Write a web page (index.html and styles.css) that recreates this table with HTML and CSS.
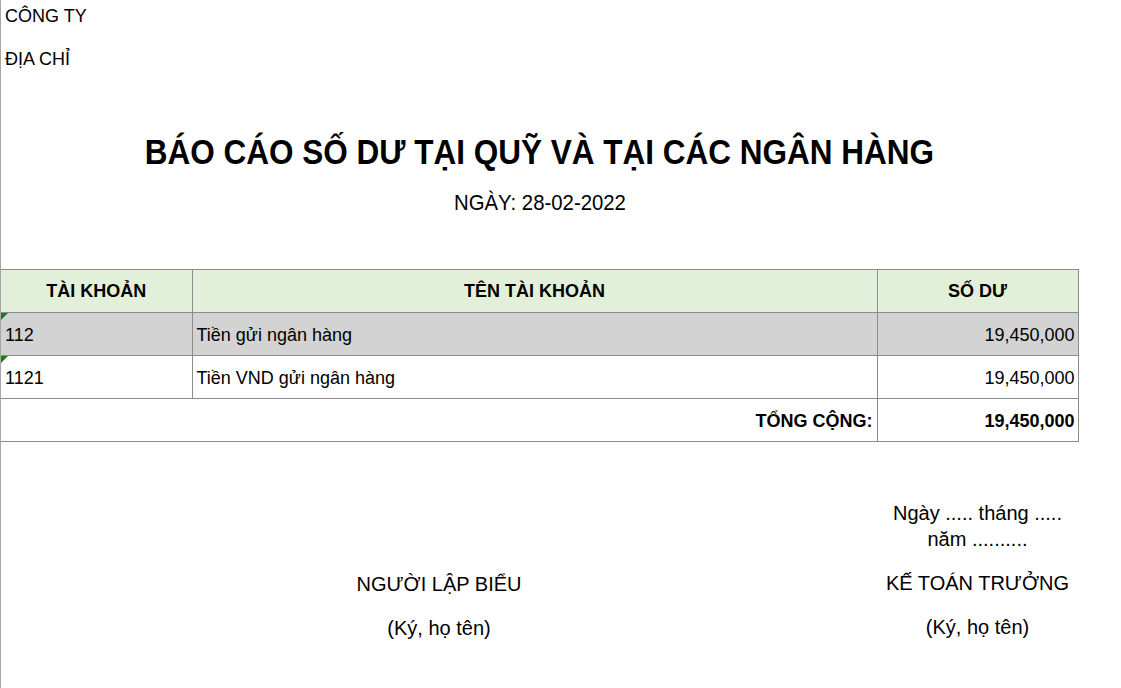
FILE: index.html
```html
<!DOCTYPE html>
<html lang="vi">
<head>
<meta charset="utf-8">
<title>Báo cáo số dư tại quỹ và tại các ngân hàng</title>
<link rel="stylesheet" href="styles.css">
</head>
<body>
<div class="page">
  <div class="company">
    <div class="company-line">CÔNG TY</div>
    <div class="company-line addr">ĐỊA CHỈ</div>
  </div>
  <h1 class="title"><span class="squeeze title-text">BÁO CÁO SỐ DƯ TẠI QUỸ VÀ TẠI CÁC NGÂN HÀNG</span></h1>
  <div class="date"><span class="squeeze date-text">NGÀY: 28-02-2022</span></div>

  <table class="report">
    <colgroup>
      <col class="c1">
      <col class="c2">
      <col class="c3">
    </colgroup>
    <thead>
      <tr>
        <th>TÀI KHOẢN</th>
        <th>TÊN TÀI KHOẢN</th>
        <th>SỐ DƯ</th>
      </tr>
    </thead>
    <tbody>
      <tr class="shade">
        <td class="acc"><span class="flag"></span>112</td>
        <td>Tiền gửi ngân hàng</td>
        <td class="num">19,450,000</td>
      </tr>
      <tr>
        <td class="acc"><span class="flag"></span>1121</td>
        <td>Tiền VND gửi ngân hàng</td>
        <td class="num">19,450,000</td>
      </tr>
      <tr class="total">
        <td colspan="2" class="total-label">TỔNG CỘNG:</td>
        <td class="num">19,450,000</td>
      </tr>
    </tbody>
  </table>

  <div class="sign">
    <div class="sign-left">
      <div class="sign-title">NGƯỜI LẬP BIỂU</div>
      <div class="sign-note">(Ký, họ tên)</div>
    </div>
    <div class="sign-right">
      <div class="sign-date">Ngày ..... tháng .....<br>năm ..........</div>
      <div class="sign-title">KẾ TOÁN TRƯỞNG</div>
      <div class="sign-note">(Ký, họ tên)</div>
    </div>
  </div>
</div>
</body>
</html>
```

FILE: styles.css
```css
html, body {
  margin: 0;
  padding: 0;
  background: #ffffff;
}

body {
  font-family: "Liberation Sans", Arial, sans-serif;
  font-size: 18px;
  color: #000;
  border-left: 1px solid #a6a6a6;
  min-height: 688px;
  box-sizing: border-box;
  overflow: hidden;
}

.page {
  width: 1077px;
}

.company {
  padding-top: 6px;
  padding-left: 4px;
}

.company-line {
  line-height: 20px;
  height: 20px;
}

.company-line.addr {
  margin-top: 23px;
}

.squeeze {
  display: inline-block;
  white-space: nowrap;
  transform-origin: center center;
}

.title {
  margin: 65px 0 0;
  font-family: "Liberation Sans", Arial, sans-serif;
  font-weight: bold;
  font-size: 35px;
  line-height: 36px;
  text-align: center;
}

.title-text {
  transform: scaleX(0.9);
}

.date {
  margin-top: 21px;
  font-size: 22px;
  line-height: 24px;
  text-align: center;
}

.date-text {
  transform: scaleX(0.925);
}

.report {
  margin-top: 54px;
  width: 1077px;
  border-collapse: collapse;
  table-layout: fixed;
}

.c1 { width: 191px; }
.c2 { width: 685px; }
.c3 { width: 201px; }

.report th,
.report td {
  border: 1px solid #8c8c8c;
  height: 43px;
  padding: 0 4px;
  box-sizing: border-box;
  vertical-align: middle;
  line-height: 20px;
}

.report td {
  padding-top: 2px;
}

.report tr > :first-child {
  border-left: none;
}

.report th {
  background: #e2f0d9;
  font-weight: bold;
  text-align: center;
}

.report .shade td {
  background: #d3d3d3;
}

.report td.acc {
  position: relative;
  padding-left: 4px;
}

.flag {
  position: absolute;
  left: 0;
  top: 0;
  width: 0;
  height: 0;
  border-top: 7px solid #1e7b1e;
  border-right: 7px solid transparent;
}

.report td.num {
  text-align: right;
  padding-right: 3px;
}

.report .total td {
  font-weight: bold;
}

.report td.total-label {
  text-align: right;
  padding-right: 4px;
}

.sign {
  display: grid;
  grid-template-columns: 876px 201px;
  font-size: 20px;
}

.sign-left {
  display: flex;
  flex-direction: column;
  align-items: center;
  padding-top: 131px;
}

.sign-right {
  display: flex;
  flex-direction: column;
  align-items: center;
  padding-top: 58px;
  text-align: center;
  white-space: nowrap;
}

.sign-date {
  line-height: 26px;
}

.sign-title {
  line-height: 22px;
  margin-top: 20px;
}

.sign-left .sign-title {
  margin-top: 0;
}

.sign-note {
  line-height: 22px;
  margin-top: 22px;
}
```
